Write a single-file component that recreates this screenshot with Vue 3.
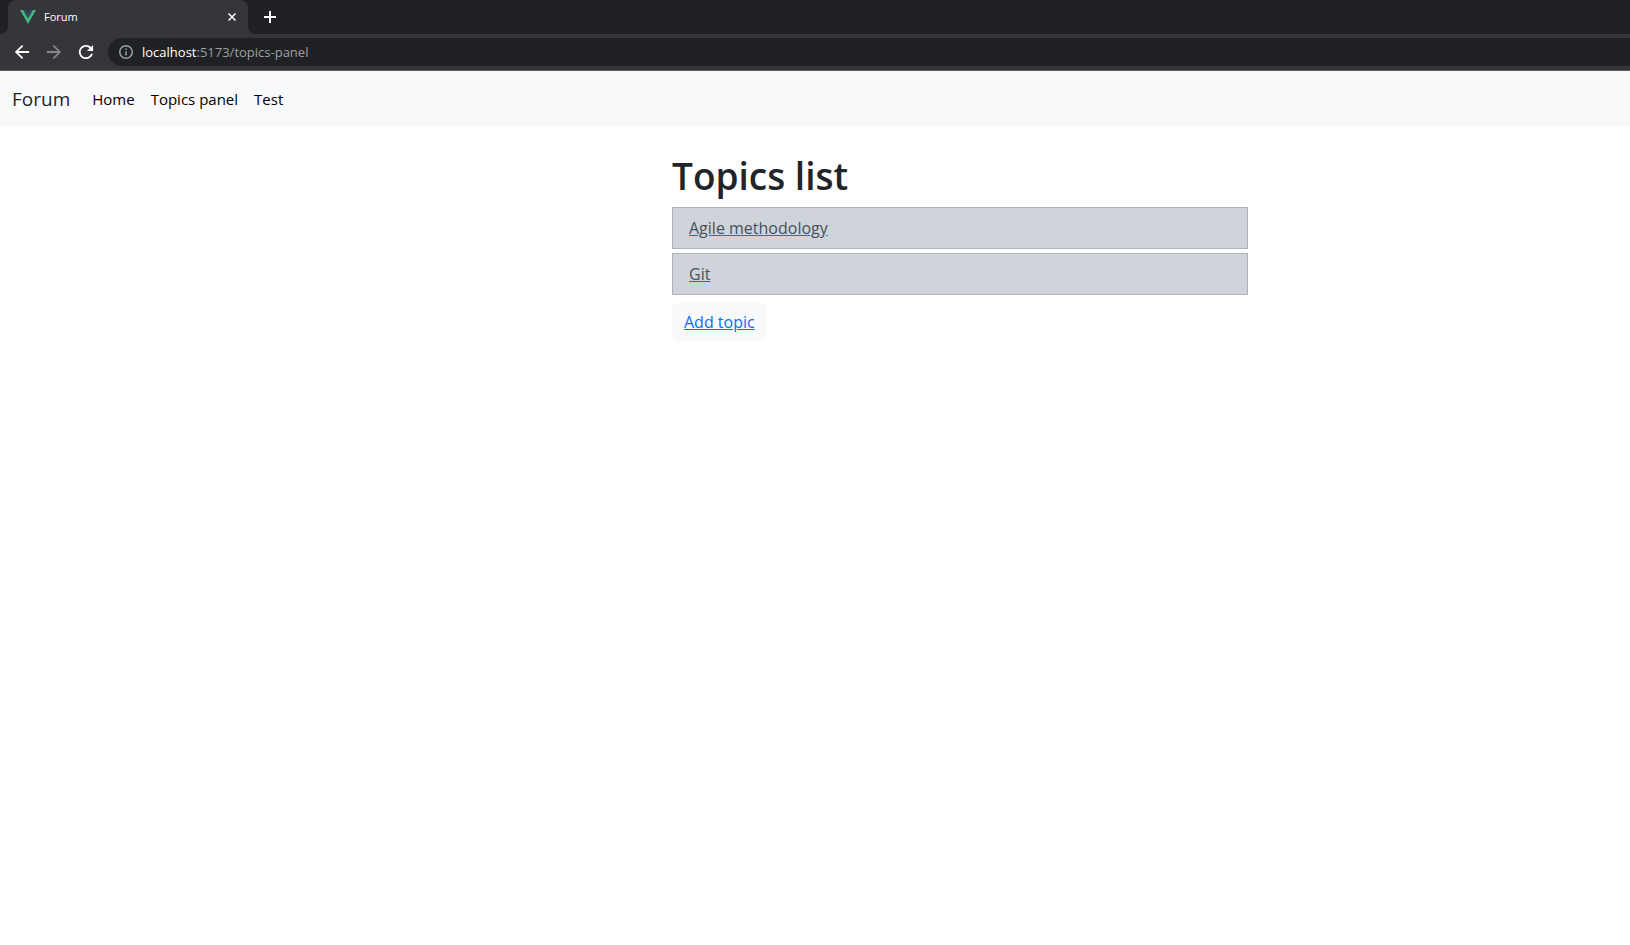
<script setup>
import { ref } from 'vue'

const address = ref('localhost:5173/topics-panel')
const navLinks = ['Home', 'Topics panel', 'Test']
const topics = ['Agile methodology', 'Git']
const splitAt = address.value.indexOf(':')
const host = address.value.slice(0, splitAt)
const rest = address.value.slice(splitAt)
</script>

<template>
  <div class="window">
    <div class="tab-strip">
      <div class="tab">
        <svg class="logo" viewBox="0 0 16 14" aria-hidden="true">
          <path fill="#41b883" d="M0 0h3.2L8 8.3 12.8 0H16L8 14z" />
          <path fill="#35495e" d="M3.2 0h2.9L8 3.3 9.9 0h2.9L8 8.3z" />
        </svg>
        <span class="tab-title">Forum</span>
        <button class="tab-close" type="button" aria-label="Close tab">
          <svg width="8" height="8" viewBox="0 0 8 8"><path d="M.5.5l7 7M7.5.5l-7 7" /></svg>
        </button>
      </div>
      <button class="tab-new" type="button" aria-label="New tab">
        <svg width="12" height="12" viewBox="0 0 12 12"><path d="M6 0v12M0 6h12" /></svg>
      </button>
    </div>

    <div class="toolbar">
      <button class="tool" type="button" aria-label="Back">
        <svg viewBox="3 3 18 18"><path d="M20 11H7.83l5.59-5.59L12 4l-8 8 8 8 1.41-1.41L7.83 13H20z" /></svg>
      </button>
      <button class="tool muted" type="button" aria-label="Forward">
        <svg viewBox="3 3 18 18"><path d="M4 11h12.17l-5.59-5.59L12 4l8 8-8 8-1.41-1.41L16.17 13H4z" /></svg>
      </button>
      <button class="tool" type="button" aria-label="Reload">
        <svg viewBox="3 3 18 18">
          <path d="M17.65 6.35C16.2 4.9 14.21 4 12 4c-4.42 0-7.99 3.58-7.99 8s3.57 8 7.99 8c3.73 0 6.84-2.55 7.73-6h-2.08c-.82 2.33-3.04 4-5.65 4-3.31 0-6-2.69-6-6s2.69-6 6-6c1.66 0 3.14.69 4.22 1.78L13 11h7V4z" />
        </svg>
      </button>
      <div class="omnibox">
        <svg class="info" viewBox="0 0 14 14" aria-hidden="true">
          <circle cx="7" cy="7" r="6.25" />
          <path d="M7 6.2v4.3M7 3.5v1.5" />
        </svg>
        <a class="address" href="#"><span class="host">{{ host }}</span>{{ rest }}</a>
      </div>
    </div>

    <nav class="navbar">
      <a class="brand" href="#">Forum</a>
      <a v-for="link in navLinks" :key="link" class="nav-link" href="#">{{ link }}</a>
    </nav>

    <main class="page">
      <section class="content">
        <h1>Topics list</h1>
        <ul class="topics">
          <li v-for="topic in topics" :key="topic">
            <a href="#"><span>{{ topic }}</span></a>
          </li>
        </ul>
        <a class="add" href="#">Add topic</a>
      </section>
    </main>
  </div>
</template>

<style>
body {
  background: #fff;
}
</style>

<style scoped>
.window {
  font-family: "Open Sans", "Noto Sans", sans-serif;
  font-size: 16px;
  line-height: 24px;
  color: #212529;
}
button {
  display: flex;
  align-items: center;
  justify-content: center;
  padding: 0;
  border: 0;
  background: none;
  color: #fff;
}
svg {
  fill: none;
  stroke: currentColor;
}
.tab-strip {
  display: flex;
  height: 34px;
  padding-left: 8px;
  background: #202124;
}
.tab {
  position: relative;
  display: flex;
  align-items: center;
  box-sizing: border-box;
  width: 240px;
  padding: 0 10px 0 12px;
  border-radius: 8px 8px 0 0;
  background: #35363a;
}
.tab::before,
.tab::after {
  content: "";
  position: absolute;
  bottom: 0;
  width: 8px;
  height: 8px;
}
.tab::before {
  right: 100%;
  background: radial-gradient(circle at 0 0, #202124 8px, #35363a 8px);
}
.tab::after {
  left: 100%;
  background: radial-gradient(circle at 100% 0, #202124 8px, #35363a 8px);
}
.logo {
  width: 16px;
  height: 14px;
  stroke: none;
}
.tab-title {
  flex: 1;
  margin-left: 8px;
  color: #fff;
  font-size: 11px;
  line-height: 16px;
}
.tab-close {
  width: 12px;
  height: 16px;
}
.tab-close svg {
  stroke-width: 1.5;
}
.tab-new {
  width: 28px;
  margin-left: 8px;
}
.tab-new svg {
  stroke-width: 2;
}
.toolbar {
  display: flex;
  align-items: center;
  height: 36px;
  padding-left: 14px;
  border-bottom: 1px solid #5b5c5f;
  background: #35363a;
}
.tool {
  width: 16px;
  height: 16px;
  margin-right: 16px;
}
.tool svg {
  width: 16px;
  height: 16px;
  fill: currentColor;
  stroke: none;
}
.muted {
  color: #86878a;
}
.omnibox {
  display: flex;
  flex: 1;
  align-items: center;
  height: 28px;
  margin-left: -2px;
  padding-left: 11px;
  border-radius: 14px 0 0 14px;
  background: #202124;
  color: #9aa0a6;
}
.info {
  width: 14px;
  height: 14px;
  stroke-width: 1.5;
}
.address {
  margin-left: 9px;
  color: #9aa0a6;
  font-size: 13px;
  line-height: 20px;
  text-decoration: none;
}
.host {
  color: #fff;
}
.navbar {
  display: flex;
  align-items: center;
  gap: 16px;
  height: 56px;
  padding: 0 12px;
  background: #f8f9fa;
}
.brand {
  margin-right: 6px;
  color: #212529;
  font-size: 19px;
  text-decoration: none;
}
.nav-link {
  color: #000;
  font-size: 15px;
  text-decoration: none;
}
.page {
  display: grid;
  grid-template-columns: 672fr 576fr 382fr;
  padding: 24px 0;
}
.content {
  grid-column: 2;
}
h1 {
  margin: 0 0 6px;
  font-size: 37px;
  font-weight: 600;
  line-height: 50px;
}
.topics {
  display: grid;
  gap: 4px;
  margin: 0 0 8px;
  padding: 0;
  list-style: none;
}
.topics li {
  padding: 8px 16px;
  border: 1px solid #adb5bd;
  background: #ced4da;
}
.topics a {
  color: #0d6efd;
}
.topics span {
  color: #495057;
}
.add {
  display: inline-block;
  padding: 7px 12px;
  border-radius: 6px;
  background: #f8f9fa;
  color: #0d6efd;
}
</style>
